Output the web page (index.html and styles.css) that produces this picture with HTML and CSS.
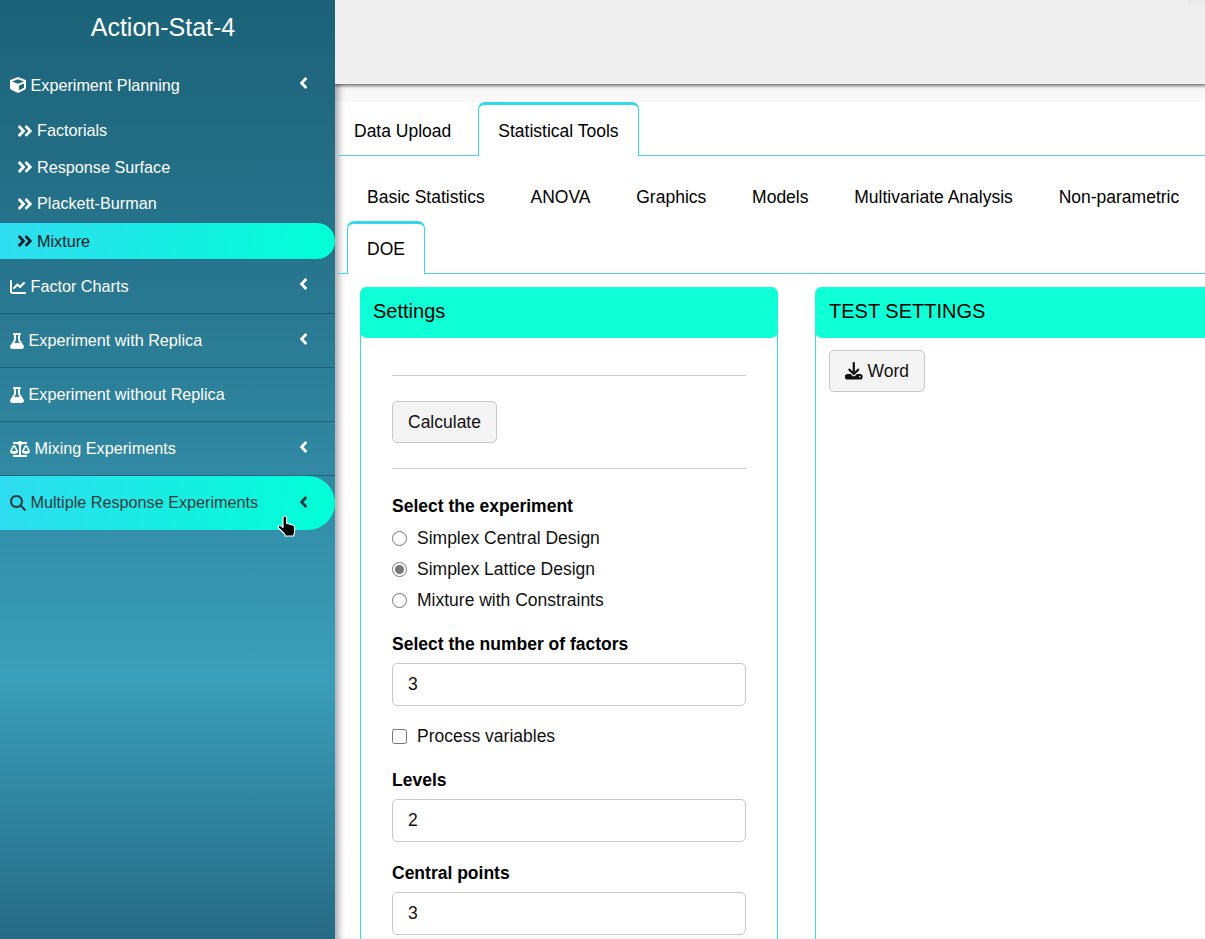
FILE: index.html
```html
<!DOCTYPE html>
<html lang="en">
<head>
<meta charset="utf-8">
<title>Action-Stat-4</title>
<link rel="stylesheet" href="styles.css">
</head>
<body>
<svg class="defs" width="0" height="0">
  <symbol id="chev" viewBox="0 0 256 512"><path fill="currentColor" d="M31.700 239l136-136c9.400-9.400 24.600-9.400 33.900 0l22.600 22.600c9.400 9.400 9.400 24.600 0 33.900L127.900 256l96.400 96.400c9.400 9.400 9.400 24.600 0 33.900L201.700 409c-9.400 9.400-24.600 9.400-33.900 0l-136-136c-9.500-9.400-9.500-24.600-.1-34z"/></symbol>
  <symbol id="dbl" viewBox="0 0 448 512"><path fill="currentColor" d="M224.300 273l-136 136c-9.400 9.400-24.600 9.400-33.900 0l-22.600-22.600c-9.400-9.400-9.400-24.600 0-33.900l96.400-96.400-96.400-96.400c-9.400-9.400-9.400-24.600 0-33.900L54.300 103c9.400-9.400 24.600-9.400 33.900 0l136 136c9.500 9.400 9.500 24.600.1 34zm192-34l-136-136c-9.400-9.400-24.600-9.400-33.900 0l-22.600 22.600c-9.400 9.400-9.400 24.600 0 33.900l96.400 96.400-96.400 96.400c-9.400 9.400-9.400 24.600 0 33.900l22.600 22.600c9.400 9.400 24.600 9.400 33.900 0l136-136c9.400-9.200 9.400-24.400 0-33.800z"/></symbol>
  <symbol id="flask" viewBox="0 0 448 512"><path fill="currentColor" d="M288 0H160 128C110.300 0 96 14.300 96 32s14.300 32 32 32V196.800c0 11.800-3.300 23.500-9.500 33.500L10.300 406.200C3.600 417.200 0 429.700 0 442.600C0 480.900 31.100 512 69.400 512H378.600c38.300 0 69.400-31.100 69.400-69.400c0-12.800-3.600-25.400-10.300-36.400L329.500 230.400c-6.200-10.100-9.500-21.700-9.500-33.500V64c17.700 0 32-14.300 32-32s-14.300-32-32-32H288zM192 196.800V64h64V196.800c0 23.700 6.600 46.900 19 67.100L309.500 320h-171L173 263.900c12.400-20.200 19-43.400 19-67.100z"/></symbol>
</svg>
<div class="app">
  <aside class="sidebar">
    <h1 class="brand">Action-Stat-4</h1>
    <nav class="menu">
      <a class="item item-first">
        <svg class="ico ico-16" viewBox="0 0 512 512"><path fill="currentColor" d="M239.100 6.300l-208 78c-18.700 7-31.100 25-31.100 45v225.100c0 18.200 10.300 34.800 26.500 42.900l208 104c13.500 6.800 29.400 6.800 42.900 0l208-104c16.300-8.100 26.500-24.800 26.500-42.900V129.300c0-20-12.400-37.900-31.100-44.900l-208-78C262 2.200 250 2.200 239.100 6.300zM256 68.400l192 72v1.100l-192 78-192-78v-1.100l192-72zm32 356V275.500l160-65v133.900l-160 80z"/></svg>
        <span>Experiment Planning</span>
        <svg class="chev"><use href="#chev"/></svg>
      </a>
      <div class="sub">
        <a class="subitem"><svg class="dbl"><use href="#dbl"/></svg><span>Factorials</span></a>
        <a class="subitem"><svg class="dbl"><use href="#dbl"/></svg><span>Response Surface</span></a>
        <a class="subitem"><svg class="dbl"><use href="#dbl"/></svg><span>Plackett-Burman</span></a>
        <a class="subitem subitem-on"><svg class="dbl"><use href="#dbl"/></svg><span>Mixture</span></a>
      </div>
      <a class="item item-charts">
        <svg class="ico ico-16" viewBox="0 0 512 512"><path fill="currentColor" d="M64 64c0-17.700-14.300-32-32-32S0 46.300 0 64V400c0 44.200 35.800 80 80 80H480c17.700 0 32-14.300 32-32s-14.300-32-32-32H80c-8.800 0-16-7.200-16-16V64zm406.600 86.600c12.500-12.500 12.500-32.800 0-45.300s-32.800-12.500-45.300 0L320 210.700l-57.400-57.400c-12.500-12.500-32.800-12.500-45.300 0l-112 112c-12.500 12.500-12.500 32.800 0 45.300s32.800 12.500 45.300 0L240 221.300l57.400 57.400c12.500 12.500 32.800 12.500 45.300 0l128-128z"/></svg>
        <span>Factor Charts</span>
        <svg class="chev"><use href="#chev"/></svg>
      </a>
      <a class="item">
        <svg class="ico ico-14"><use href="#flask"/></svg>
        <span>Experiment with Replica</span>
        <svg class="chev"><use href="#chev"/></svg>
      </a>
      <a class="item">
        <svg class="ico ico-14"><use href="#flask"/></svg>
        <span>Experiment without Replica</span>
      </a>
      <a class="item">
        <svg class="ico ico-20" viewBox="0 0 640 512"><path fill="currentColor" d="M256 336h-.02c0-16.180 1.340-8.730-85.050-181.510-17.650-35.290-68.190-35.360-85.870 0C-2.060 328.750.02 320.330.02 336H0c0 44.180 57.310 80 128 80s128-35.820 128-80zM128 176l72 144H56l72-144zm511.980 160c0-16.180 1.340-8.730-85.050-181.510-17.650-35.290-68.190-35.360-85.870 0-87.120 174.260-85.040 165.840-85.040 181.510H384c0 44.180 57.310 80 128 80s128-35.820 128-80h-.02zM440 320l72-144 72 144H440zm88 128H352V153.770c23.510-10.290 41.160-31.480 46.390-57.770H528c8.840 0 16-7.160 16-16V48c0-8.840-7.160-16-16-16H383.640C369.040 12.680 346.090 0 320 0s-49.040 12.680-63.640 32H112c-8.840 0-16 7.160-16 16v32c0 8.840 7.160 16 16 16h129.610c5.230 26.290 22.870 47.480 46.390 57.770V448H112c-8.840 0-16 7.160-16 16v32c0 8.840 7.160 16 16 16h416c8.840 0 16-7.160 16-16v-32c0-8.840-7.160-16-16-16z"/></svg>
        <span>Mixing Experiments</span>
        <svg class="chev"><use href="#chev"/></svg>
      </a>
      <a class="item item-on">
        <svg class="ico ico-16" viewBox="0 0 512 512"><path fill="currentColor" d="M416 208c0 45.900-14.900 88.300-40 122.700L502.600 457.400c12.500 12.500 12.500 32.800 0 45.300s-32.800 12.500-45.300 0L330.700 376c-34.400 25.200-76.800 40-122.700 40C93.100 416 0 322.900 0 208S93.100 0 208 0S416 93.100 416 208zM208 352a144 144 0 1 0 0-288 144 144 0 1 0 0 288z"/></svg>
        <span>Multiple Response Experiments</span>
        <svg class="chev"><use href="#chev"/></svg>
      </a>
    </nav>
  </aside>
  <main class="main">
    <header class="topbar"><div class="topbar-chip"></div></header>
    <div class="content">
      <div class="tabs tabs-top">
        <a class="tab">Data Upload</a>
        <a class="tab tab-on">Statistical Tools</a>
      </div>
      <div class="tabs tabs-sub">
        <a class="tab">Basic Statistics</a>
        <a class="tab">ANOVA</a>
        <a class="tab">Graphics</a>
        <a class="tab">Models</a>
        <a class="tab">Multivariate Analysis</a>
        <a class="tab">Non-parametric</a>
        <a class="tab tab-on">DOE</a>
      </div>
      <div class="panels">
        <section class="panel panel-settings">
          <h2 class="panel-head">Settings</h2>
          <div class="panel-body settings-body">
            <hr class="rule rule-a">
            <button class="btn">Calculate</button>
            <hr class="rule rule-b">
            <div class="field field-radio">
              <label class="label">Select the experiment</label>
              <label class="choice"><input type="radio" name="exp"><span>Simplex Central Design</span></label>
              <label class="choice"><input type="radio" name="exp" checked><span>Simplex Lattice Design</span></label>
              <label class="choice"><input type="radio" name="exp"><span>Mixture with Constraints</span></label>
            </div>
            <div class="field">
              <label class="label">Select the number of factors</label>
              <input class="input" type="text" value="3">
            </div>
            <label class="choice choice-check"><input type="checkbox"><span>Process variables</span></label>
            <div class="field field-levels">
              <label class="label">Levels</label>
              <input class="input" type="text" value="2">
            </div>
            <div class="field">
              <label class="label">Central points</label>
              <input class="input" type="text" value="3">
            </div>
          </div>
        </section>
        <section class="panel panel-test">
          <h2 class="panel-head">TEST SETTINGS</h2>
          <div class="panel-body test-body">
            <button class="btn btn-word">
              <svg class="dl" viewBox="0 0 512 512"><path fill="currentColor" d="M288 32c0-17.700-14.300-32-32-32s-32 14.300-32 32V274.700l-73.400-73.400c-12.500-12.500-32.800-12.500-45.300 0s-12.500 32.800 0 45.300l128 128c12.500 12.500 32.800 12.500 45.300 0l128-128c12.500-12.500 12.500-32.800 0-45.300s-32.800-12.500-45.300 0L288 274.700V32zM64 352c-35.300 0-64 28.700-64 64v32c0 35.300 28.700 64 64 64H448c35.300 0 64-28.700 64-64V416c0-35.300-28.700-64-64-64H346.500l-45.300 45.300c-25 25-65.500 25-90.500 0L165.500 352H64zm368 56a24 24 0 1 1 0 48 24 24 0 1 1 0-48z"/></svg>
              <span>Word</span>
            </button>
          </div>
        </section>
      </div>
    </div>
  </main>
</div>
<svg class="cursor" viewBox="0 0 20 22"><path d="M6 3c0-1.300.8-2 1.800-2s1.800.7 1.800 2v5.500l2 .3 2 .6 2 .7c1.200.4 2 1.200 2 2.400v4.500c0 1-.4 1.800-.8 2.500V21H8v-1.500C6.500 17.500 4 15.500 2 13.500c-1-1-1-2.200-.2-2.800.8-.6 2-.2 2.700.5L6 12.500z" fill="#000" stroke="#fff" stroke-width="1.100" stroke-linejoin="round"/></svg>
</body>
</html>
```
FILE: styles.css
```css
* { box-sizing: border-box; }
html, body { margin: 0; height: 939px; overflow: hidden; }
body { font-family: "Liberation Sans", Arial, sans-serif; font-size: 17.5px; color: #000; background: #fff; position: relative; }
.defs { position: absolute; }
.app { display: flex; height: 939px; }

.sidebar {
  width: 335px; flex: none; height: 939px; position: relative; z-index: 2; color: #fff; font-size: 16.2px;
  background: linear-gradient(180deg, #1b6278 0%, #2a7a93 35%, #3a9fba 72%, #266a85 100%);
}
.brand { margin: 0; height: 54px; font-size: 25px; line-height: 54px; font-weight: 400; text-align: center; padding-right: 9px; }
.menu { display: flex; flex-direction: column; }
.item { display: flex; align-items: center; height: 54px; padding-left: 10px; border-bottom: 1px solid rgba(20,70,95,.55); position: relative; }
.item span { margin-left: 4.500px; }
.item-first { height: 62px; border-bottom: 0; }
.item-first .chev { top: 20px; }
.item-charts { height: 55px; padding-top: 1px; }
.item-on { height: 54px; padding-bottom: 1px; color: #2b3a40; border-bottom: 0; border-radius: 0 27px 27px 0; background: linear-gradient(100deg, #2fdcf0 0%, #00ffd5 100%); }
.item-on .chev { top: 17px; }
.ico { flex: none; display: block; }
.ico-16 { width: 16px; height: 16px; }
.ico-14 { width: 14px; height: 16px; }
.ico-20 { width: 20px; height: 16px; }
.chev { position: absolute; left: 299px; top: 16px; width: 9px; height: 18px; }
.sub { display: flex; flex-direction: column; margin-top: -3.750px; }
.subitem { display: flex; align-items: center; height: 36.500px; padding-left: 17px; }
.subitem span { margin-left: 4px; }
.dbl { width: 16px; height: 18px; flex: none; }
.subitem-on { height: 36px; margin-top: 1.250px; color: #06202a; border-radius: 0 18px 18px 0; background: linear-gradient(100deg, #2fdcf0 0%, #00ffd5 100%); }

.main { flex: 1; min-width: 0; display: flex; flex-direction: column; position: relative; }
.topbar { height: 84px; flex: none; display: flex; justify-content: flex-end; background: #efefef; box-shadow: 0 1px 3px 1px rgba(0,0,0,.5); position: relative; z-index: 1; }
.topbar-chip { width: 17px; height: 6px; background: #ebebeb; }
.content { flex: 1; padding: 18px 0 0 3px; min-width: 0; overflow: hidden; background: linear-gradient(180deg, #f8f8f8 0, #f8f8f8 18px, #fff 18px); box-shadow: inset 7px 0 6px -3px rgba(0,0,0,.32); }

.tabs { display: flex; }
.tabs-top { height: 54px; border-bottom: 1px solid #4fd6e6; }
.tab { display: block; height: 53px; padding: 0 16px; line-height: 56px; white-space: nowrap; border: 1px solid transparent; }
.tabs-top .tab { padding: 0 19px; }
.tabs-top .tab:first-child { padding: 0 26px 0 15px; }
.tab-on { background: #fff; border: 1px solid #33d9ea; border-top: 3px solid #33d9ea; border-bottom: 0; border-radius: 7px 7px 0 0; height: 54px; line-height: 53px; }
.tabs-sub { flex-wrap: wrap; padding: 15px 0 0 9px; border-bottom: 1px solid #4fd6e6; height: 118px; align-content: flex-start; gap: 0 5.800px; }
.tabs-sub .tab { height: 50px; line-height: 50px; padding: 0 19px; }
.tabs-sub .tab-on { height: 53px; line-height: 50px; }

.panels { display: flex; gap: 37px; padding: 13px 0 0 22px; }
.panel { flex: none; border-radius: 7px 7px 0 0; border: 1px solid #3ddcd8; border-bottom: 0; height: 700px; }
.panel-settings { width: 418px; }
.panel-test { width: 460px; }
.panel-head { margin: -1px 0 0 -1px; height: 51px; width: calc(100% + 2px); background: #0fffd7; font-size: 20px; line-height: 48px; font-weight: 400; padding-left: 13px; border-radius: 7px; }
.panel-test .panel-head { padding-left: 14px; }
.panel-body { padding: 0; }
.settings-body { padding: 37px 31px 0 31px; }
.test-body { padding: 12px 13px; }
.rule { border: 0; border-top: 1px solid #cfcfcf; margin: 0; }
.rule-a { margin-bottom: 25px; }
.rule-b { margin-top: 25px; margin-bottom: 27px; }
.btn { display: inline-flex; align-items: center; height: 42px; padding: 0 15px; font: inherit; color: #111; background: #f4f4f4; border: 1px solid #c8c8c8; border-radius: 5px; }
.btn-word { gap: 5px; }
.dl { width: 17.600px; height: 17.600px; }
.label { display: block; font-weight: 700; line-height: 20px; }
.field { margin-bottom: 20px; }
.field-radio { margin-bottom: 18px; }
.field .label { margin-bottom: 9px; }
.field-radio .label { margin-bottom: 7px; }
.choice { display: flex; align-items: center; height: 31px; color: #111; }
.choice input { width: 15px; height: 15px; margin: 0 10px 0 0; accent-color: #777; }
.choice-check { height: 22px; margin: -1px 0 23px; }
.field-levels { margin-bottom: 21px; }
.input { display: block; width: 100%; height: 43px; padding: 0 15px; font: inherit; color: #111; border: 1px solid #c8c8c8; border-radius: 5px; background: #fff; }

.cursor { position: absolute; left: 277px; top: 515px; width: 20px; height: 22px; z-index: 5; }
```
